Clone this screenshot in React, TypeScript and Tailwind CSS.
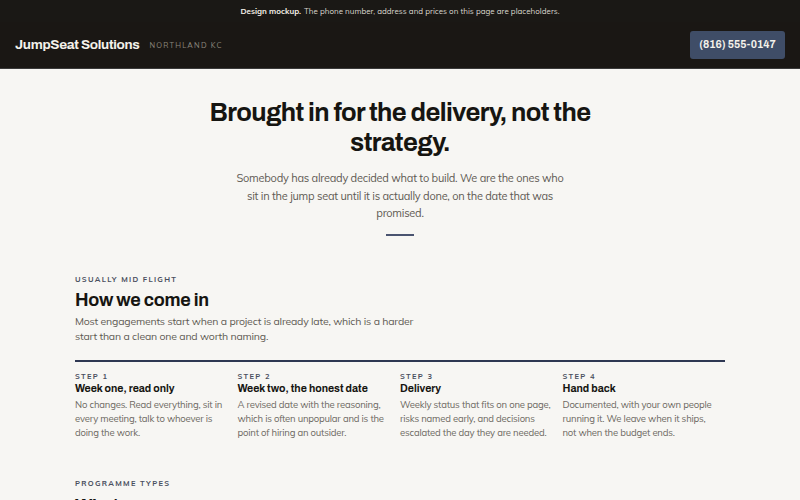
const steps = [
  {
    label: "Step 1",
    title: "Week one, read only",
    body: "No changes. Read everything, sit in every meeting, talk to whoever is doing the work.",
  },
  {
    label: "Step 2",
    title: "Week two, the honest date",
    body: "A revised date with the reasoning, which is often unpopular and is the point of hiring an outsider.",
  },
  {
    label: "Step 3",
    title: "Delivery",
    body: "Weekly status that fits on one page, risks named early, and decisions escalated the day they are needed.",
  },
  {
    label: "Step 4",
    title: "Hand back",
    body: "Documented, with your own people running it. We leave when it ships, not when the budget ends.",
  },
];

const heading = "font-['Archivo','Liberation_Sans',Arial,sans-serif]";
const body = "font-['Mulish','Lato',sans-serif]";

export default function App() {
  return (
    <div className={`min-h-screen bg-[#f7f6f3] ${body}`}>
      {/* mockup notice */}
      <div className="h-[22px] flex items-center justify-center bg-[#1a1815] text-[8px] text-[#d8d4cb]">
        <span className="font-bold text-[#f2eee6] mr-[3px]">Design mockup.</span>
        The phone number, address and prices on this page are placeholders.
      </div>

      <header className="h-[47px] flex items-center justify-between bg-[#1a1714] border-b border-[#3a3a3a] pl-[15px] pr-[15px]">
        <div className="flex items-center gap-[10px]">
          <span className={`${heading} text-[13.5px] font-bold text-[#f4f1ea] tracking-[-0.3px]`}>JumpSeat Solutions</span>
          <span className="text-[7.5px] tracking-[1.2px] text-[#8c877d] mt-[1px]">NORTHLAND KC</span>
        </div>
        <a className={`${heading} h-[28px] w-[95px] flex items-center justify-center rounded-[3px] bg-[#3f4d67] text-[10.5px] font-bold text-[#f4f1ea]`}>
          (816) 555-0147
        </a>
      </header>

      <main>
        <section className="flex flex-col items-center text-center pt-[29px]">
          <h1 className={`${heading} w-[420px] text-[25.5px] leading-[30px] font-bold text-[#161511] tracking-[-0.6px]`}>
            Brought in for the delivery, not the strategy.
          </h1>
          <p className="w-[330px] mt-[12px] text-[11px] leading-[17.5px] tracking-[-0.25px] text-[#5f5b54]">
            Somebody has already decided what to build. We are the ones who sit in the jump seat until it is actually done, on the date that was promised.
          </p>
          <div className="w-[28px] h-[2px] bg-[#4a5470] mt-[11px]" />
        </section>

        <section className="w-[650px] mx-auto mt-[37px]">
          <div className="text-[7.5px] leading-[12px] font-bold tracking-[1.3px] text-[#4a4f5e]">USUALLY MID FLIGHT</div>
          <h2 className={`${heading} mt-[3px] text-[18px] leading-[24px] font-bold text-[#161511] tracking-[-0.3px]`}>How we come in</h2>
          <p className="w-[340px] mt-[2px] text-[10.5px] leading-[15px] tracking-[-0.2px] text-[#5f5b54]">
            Most engagements start when a project is already late, which is a harder start than a clean one and worth naming.
          </p>

          <div className="mt-[16px] border-t-2 border-[#2e3852] grid grid-cols-4">
            {steps.map((s) => (
              <div key={s.label} className="pt-[8px] pr-[10px]">
                <div className="text-[7.5px] leading-[12px] font-bold tracking-[1.3px] text-[#4a4f5e]">{s.label.toUpperCase()}</div>
                <div className={`${heading} text-[10.5px] leading-[14px] font-bold text-[#161511]`}>{s.title}</div>
                <p className="mt-[1px] text-[9.5px] leading-[14px] tracking-[-0.2px] text-[#6c6861]">{s.body}</p>
              </div>
            ))}
          </div>
        </section>

        <section className="w-[650px] mx-auto mt-[38px]">
          <div className="text-[7.5px] leading-[12px] font-bold tracking-[1.3px] text-[#4a4f5e]">PROGRAMME TYPES</div>
          <h2 className={`${heading} mt-[5px] text-[18px] leading-[24px] font-bold text-[#161511] tracking-[-0.3px]`}>What we run</h2>
        </section>
      </main>
    </div>
  );
}
